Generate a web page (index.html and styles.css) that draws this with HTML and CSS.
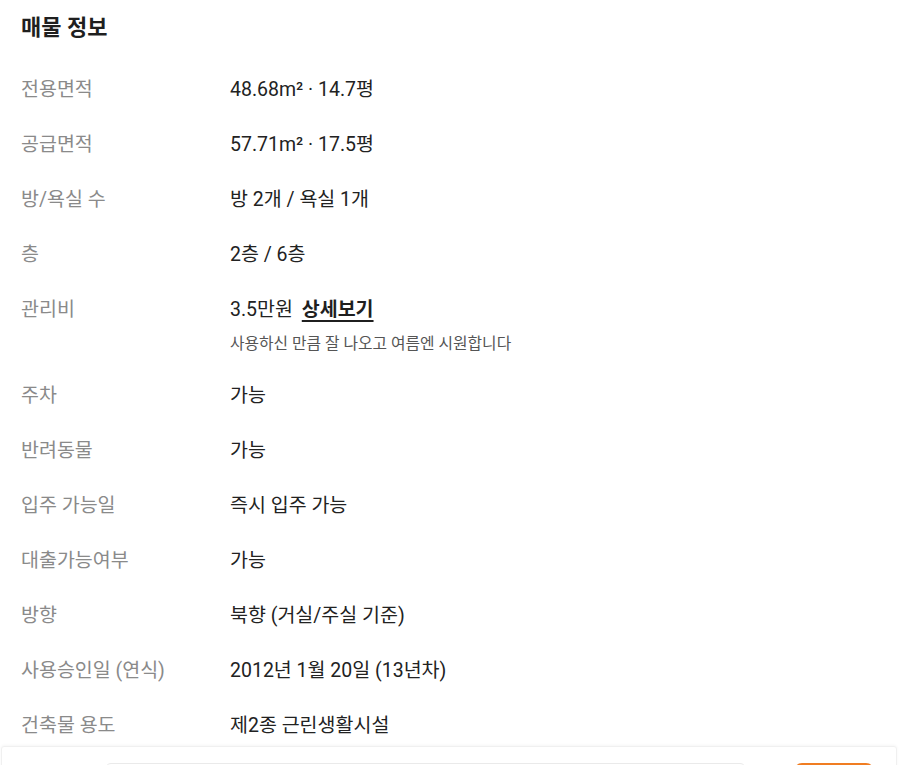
FILE: index.html
```html
<!DOCTYPE html>
<html lang="ko">
<head>
<meta charset="utf-8">
<link rel="stylesheet" href="styles.css">
</head>
<body>
<section class="info">
  <h2 class="title">매물 정보</h2>
  <dl class="rows">
    <div class="row"><dt>전용면적</dt><dd>48.68m² · 14.7평</dd></div>
    <div class="row"><dt>공급면적</dt><dd>57.71m² · 17.5평</dd></div>
    <div class="row"><dt>방/욕실 수</dt><dd>방 2개 / 욕실 1개</dd></div>
    <div class="row"><dt>층</dt><dd>2층 / 6층</dd></div>
    <div class="row"><dt>관리비</dt><dd>3.5만원 <a class="more">상세보기</a><p class="sub">사용하신 만큼 잘 나오고 여름엔 시원합니다</p></dd></div>
    <div class="row"><dt>주차</dt><dd>가능</dd></div>
    <div class="row"><dt>반려동물</dt><dd>가능</dd></div>
    <div class="row"><dt>입주 가능일</dt><dd>즉시 입주 가능</dd></div>
    <div class="row"><dt>대출가능여부</dt><dd>가능</dd></div>
    <div class="row"><dt>방향</dt><dd>북향 (거실/주실 기준)</dd></div>
    <div class="row"><dt>사용승인일 (연식)</dt><dd>2012년 1월 20일 (13년차)</dd></div>
    <div class="row"><dt>건축물 용도</dt><dd>제2종 근린생활시설</dd></div>
  </dl>
</section>
<div class="bottombar">
  <div class="field"></div>
  <div class="btn"></div>
</div>
</body>
</html>
```
FILE: styles.css
```css
html, body {
  margin: 0;
  padding: 0;
  background: #fff;
  font-family: Roboto, "Noto Sans CJK KR", sans-serif;
  color: #222;
}
.info {
  padding: 14px 21px 60px;
}
.title {
  margin: 0 0 20px;
  font-size: 22px;
  line-height: 28px;
  font-weight: 700;
  color: #1f1f1f;
}
.rows {
  margin: 0;
}
.row {
  display: flex;
  padding: 14px 0;
}
.row dt {
  width: 209px;
  flex: none;
  font-size: 19.5px;
  line-height: 27px;
  color: #8a8a8a;
}
.row dd {
  margin: 0;
  font-size: 19.5px;
  line-height: 27px;
  color: #222;
}
.more {
  font-weight: 700;
  margin-left: 4px;
  text-decoration: underline;
  text-decoration-thickness: 2px;
  text-underline-offset: 4px;
  color: #1f1f1f;
}
.sub {
  margin: 10px 0 0;
  font-size: 15.8px;
  line-height: 21px;
  color: #555;
}
.bottombar {
  position: fixed;
  left: 1px;
  right: 3px;
  top: 746px;
  height: 60px;
  background: #fff;
  border: 1px solid #f0f0f0;
  border-radius: 3px;
  box-shadow: 0 -1px 3px rgba(0,0,0,0.04);
  display: flex;
  align-items: flex-start;
  padding: 16px 22px 0 103px;
  gap: 48px;
}
.field {
  flex: 1;
  height: 40px;
  border: 1px solid #eaeaea;
  border-radius: 6px;
}
.btn {
  width: 80px;
  height: 40px;
  background: #f07d22;
  border-radius: 8px;
}
```
